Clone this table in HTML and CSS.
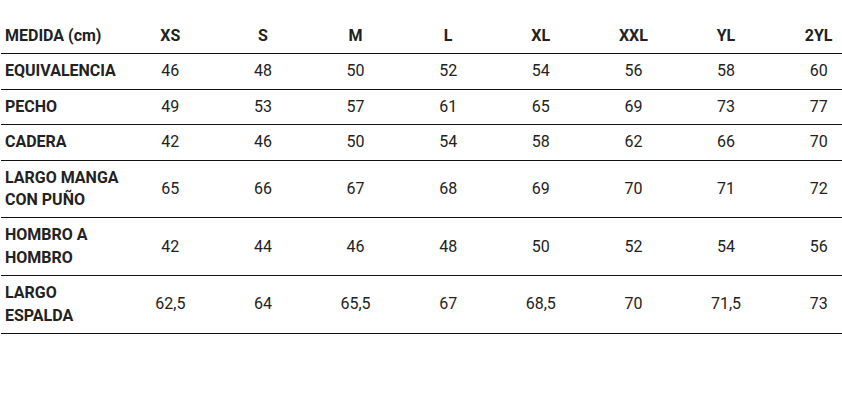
FILE: index.html
```html
<!DOCTYPE html>
<html lang="es">
<head>
<meta charset="utf-8">
<title>Tabla de medidas</title>
<link rel="stylesheet" href="styles.css">
</head>
<body>
<div class="wrap">
<table class="sizes">
<colgroup>
<col class="c-label">
<col class="c-val"><col class="c-val"><col class="c-val"><col class="c-val">
<col class="c-val"><col class="c-val"><col class="c-val"><col class="c-val">
</colgroup>
<thead>
<tr><th>MEDIDA (cm)</th><th>XS</th><th>S</th><th>M</th><th>L</th><th>XL</th><th>XXL</th><th>YL</th><th>2YL</th></tr>
</thead>
<tbody>
<tr><th>EQUIVALENCIA</th><td>46</td><td>48</td><td>50</td><td>52</td><td>54</td><td>56</td><td>58</td><td>60</td></tr>
<tr><th>PECHO</th><td>49</td><td>53</td><td>57</td><td>61</td><td>65</td><td>69</td><td>73</td><td>77</td></tr>
<tr><th>CADERA</th><td>42</td><td>46</td><td>50</td><td>54</td><td>58</td><td>62</td><td>66</td><td>70</td></tr>
<tr><th>LARGO MANGA CON PUÑO</th><td>65</td><td>66</td><td>67</td><td>68</td><td>69</td><td>70</td><td>71</td><td>72</td></tr>
<tr><th>HOMBRO A HOMBRO</th><td>42</td><td>44</td><td>46</td><td>48</td><td>50</td><td>52</td><td>54</td><td>56</td></tr>
<tr><th>LARGO ESPALDA</th><td>62,5</td><td>64</td><td>65,5</td><td>67</td><td>68,5</td><td>70</td><td>71,5</td><td>73</td></tr>
</tbody>
</table>
</div>
</body>
</html>
```
FILE: styles.css
```css
html, body {
  margin: 0;
  padding: 0;
  background: #fff;
}
body {
  font-family: Roboto, "Liberation Sans", sans-serif;
  font-size: 16px;
  color: #222;
}
.wrap {
  width: 842px;
  overflow: hidden;
  padding-top: 19px;
}
.sizes {
  border-collapse: collapse;
  table-layout: fixed;
  width: 864px;
  margin-left: 1px;
}
.c-label { width: 123px; }
.c-val { width: 92.6px; }
.sizes th,
.sizes td {
  padding: 6px 2px;
  line-height: 22.4px;
  border-bottom: 1px solid #111;
  text-align: center;
  vertical-align: middle;
}
.sizes th {
  font-weight: 700;
}
.sizes tbody th,
.sizes thead th:first-child {
  text-align: left;
  padding-left: 4px;
}
```
